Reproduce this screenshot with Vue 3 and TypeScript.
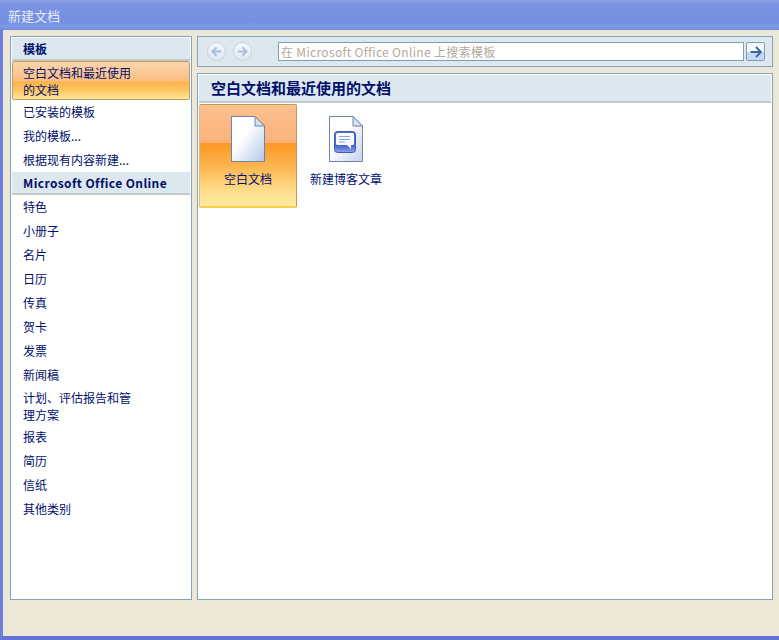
<script setup lang="ts">
const topLinks = ['已安装的模板', '我的模板...', '根据现有内容新建...']
const categories = ['特色', '小册子', '名片', '日历', '传真', '贺卡', '发票', '新闻稿']
const moreCategories = ['报表', '简历', '信纸', '其他类别']
</script>

<template>
  <div class="window">
    <header class="titlebar">新建文档</header>
    <div class="body">
      <aside class="side">
        <div class="side-head first">模板</div>
        <div class="side-item selected">空白文档和最近使用<br />的文档</div>
        <div v-for="item in topLinks" :key="item" class="side-item">{{ item }}</div>
        <div class="side-head online">Microsoft Office Online</div>
        <div v-for="item in categories" :key="item" class="side-item">{{ item }}</div>
        <div class="side-item double">计划、评估报告和管<br />理方案</div>
        <div v-for="item in moreCategories" :key="item" class="side-item">{{ item }}</div>
      </aside>
      <main class="main">
        <div class="toolbar">
          <button class="round">
            <svg width="13" height="13" viewBox="0 0 14 14"><path d="M12 7H3M7 2.500 2.500 7 7 11.500" fill="none" stroke="#a9bbd6" stroke-width="2" /></svg>
          </button>
          <button class="round">
            <svg width="13" height="13" viewBox="0 0 14 14"><path d="M2 7h9M7 2.500 11.500 7 7 11.500" fill="none" stroke="#a9bbd6" stroke-width="2" /></svg>
          </button>
          <div class="search">在 Microsoft Office Online 上搜索模板</div>
          <button class="go">
            <svg width="14" height="14" viewBox="0 0 14 14"><path d="M1.500 7h10M7 2 12 7 7 12" fill="none" stroke="#3f6299" stroke-width="1.800" /></svg>
          </button>
        </div>
        <section class="content">
          <h2 class="content-head">空白文档和最近使用的文档</h2>
          <div class="tiles">
            <div class="tile active">
              <svg class="doc" width="34" height="46" viewBox="0 0 34 46">
                <defs>
                  <linearGradient id="blank" x1="0" y1="0" x2="1" y2="1">
                    <stop offset="0.4" stop-color="#ffffff" />
                    <stop offset="1" stop-color="#b4c7e8" />
                  </linearGradient>
                </defs>
                <path d="M.5.500H24L33.500 10V45.500H.5Z" fill="url(#blank)" stroke="#6f84a8" />
                <path d="M24 .5V10H33.500Z" fill="#d7e1ef" stroke="#6f84a8" />
              </svg>
              <span>空白文档</span>
            </div>
            <div class="tile">
              <svg class="doc" width="34" height="46" viewBox="0 0 34 46">
                <defs>
                  <linearGradient id="blog" x1="0" y1="0" x2="1" y2="1">
                    <stop offset="0.4" stop-color="#ffffff" />
                    <stop offset="1" stop-color="#c3d2ec" />
                  </linearGradient>
                  <linearGradient id="badge" x1="0" y1="0" x2="0" y2="1">
                    <stop offset="0" stop-color="#4f70d4" />
                    <stop offset="0.7" stop-color="#4a68cc" />
                    <stop offset="1" stop-color="#8ea5e8" />
                  </linearGradient>
                </defs>
                <path d="M.5.500H24L33.500 10V45.500H.5Z" fill="url(#blog)" stroke="#6f84a8" />
                <path d="M24 .5V10H33.500Z" fill="#d7e1ef" stroke="#6f84a8" />
                <rect x="5.500" y="15.500" width="21" height="21" rx="3" fill="url(#badge)" stroke="#3d5cae" />
                <path d="M8.500 17H23.500A1.500 1.500 0 0 1 25 18.500V27.500A1.500 1.500 0 0 1 23.500 29H22V33L18 29H8.500A1.500 1.500 0 0 1 7 27.500V18.500A1.500 1.500 0 0 1 8.500 17Z" fill="#f7f9ff" />
                <path d="M10 20.500H21M10 23.500H21M10 26H16" stroke="#8ca6e0" />
              </svg>
              <span>新建博客文章</span>
            </div>
          </div>
        </section>
      </main>
    </div>
  </div>
</template>

<style scoped>
.window {
  width: 779px;
  height: 640px;
  box-sizing: border-box;
  display: flex;
  flex-direction: column;
  background: #ebe8d8;
  border-left: 3px solid #6d7fdd;
  border-bottom: 4px solid #6474d6;
  font-family: "Noto Sans CJK SC", "Liberation Sans", sans-serif;
  font-size: 12px;
  color: #000f6b;
}

.titlebar {
  height: 30px;
  margin-left: -3px;
  padding-left: 8px;
  line-height: 31px;
  flex: none;
  font-size: 13px;
  color: #e6ecfa;
  background: linear-gradient(#8ea3e8 0, #7b92e2 4px, #7590e0 22px, #7c9ce6 27px, #7289dc 30px);
}

.body {
  flex: 1;
  display: flex;
  gap: 5px;
  padding: 6px 5px 0 7px;
  height: 570px;
  box-sizing: border-box;
}

.side {
  width: 182px;
  height: 564px;
  box-sizing: border-box;
  flex: none;
  background: #fff;
  border: 1px solid #84a2bb;
  padding: 1px;
}

.side-head {
  padding-left: 11px;
  font-weight: 700;
  background: #dde7ee;
  border-bottom: 2px solid #c6c9c9;
}

.side-head.first {
  height: 23px;
  line-height: 22px;
  box-sizing: border-box;
}

.side-head.online {
  height: 23px;
  line-height: 22px;
  box-sizing: border-box;
  letter-spacing: 0.4px;
}

.side-item {
  height: 24px;
  line-height: 24px;
  padding-left: 11px;
}

.side-item.selected {
  height: 39px;
  line-height: 17px;
  box-sizing: border-box;
  padding-top: 2px;
  padding-left: 10px;
  border: 1px solid #c09a5e;
  border-radius: 2px;
  background: linear-gradient(#fcd5ac 0, #fbbd82 52%, #fdb24a 53%, #fdc765 78%, #fee79b 100%);
}

.side-item.double {
  height: 38px;
  line-height: 17px;
  padding-top: 2px;
  box-sizing: border-box;
}

.main {
  width: 576px;
  flex: none;
  display: flex;
  flex-direction: column;
  gap: 6px;
}

.toolbar {
  height: 31px;
  box-sizing: border-box;
  flex: none;
  display: flex;
  align-items: center;
  background: #dde7ee;
  border: 1px solid #84a2bb;
  padding-left: 9px;
}

.round {
  width: 19px;
  height: 19px;
  padding: 0;
  margin-right: 7px;
  display: flex;
  align-items: center;
  justify-content: center;
  border: 1px solid #c5d3ea;
  border-radius: 50%;
  background: linear-gradient(#f5f8fd, #dfe8f6);
}

.search {
  width: 466px;
  height: 19px;
  box-sizing: border-box;
  margin-left: 19px;
  padding-left: 2px;
  line-height: 18px;
  background: #fff;
  border: 1px solid #7f9db9;
  color: #b3a99a;
  font-size: 12px;
  letter-spacing: 0.33px;
}

.go {
  width: 19px;
  height: 19px;
  margin-left: 2px;
  padding: 0;
  display: flex;
  align-items: center;
  justify-content: center;
  border: 1px solid #7f9db9;
  border-radius: 2px;
  background: linear-gradient(#f4f8fd 50%, #c6d9f3 50%);
}

.content {
  flex: none;
  height: 527px;
  box-sizing: border-box;
  background: #fff;
  border: 1px solid #84a2bb;
  padding: 1px;
}

.content-head {
  margin: 0;
  height: 28px;
  box-sizing: border-box;
  padding-left: 12px;
  font-size: 15px;
  line-height: 25px;
  font-weight: 700;
  background: #dde7ee;
  border-bottom: 2px solid #c6c9c9;
}

.tiles {
  display: flex;
  padding-top: 1px;
}

.tile {
  width: 98px;
  height: 104px;
  box-sizing: border-box;
  display: flex;
  flex-direction: column;
  align-items: center;
  padding-top: 12px;
}

.tile.active {
  border: 1px solid #c09a5e;
  border-bottom: 2px solid #fdd04a;
  border-left-color: #e6b774;
  border-radius: 2px;
  padding-top: 11px;
  background: linear-gradient(#fbc18e 0, #fbb27c 37%, #fb9828 38%, #fdb44d 60%, #fedd8c 85%, #feeaa0 100%);
}

.doc {
  display: block;
  flex: none;
}

.tile span {
  margin-top: 8px;
  line-height: 18px;
  white-space: nowrap;
}
</style>
